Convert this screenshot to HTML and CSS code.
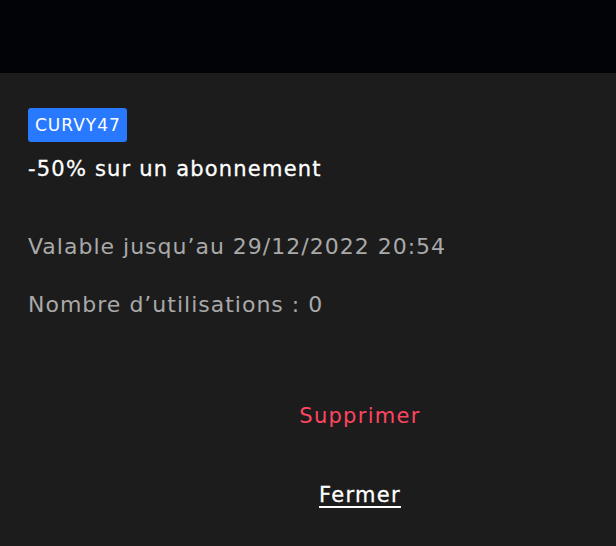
FILE: index.html
```html
<!DOCTYPE html>
<html lang="fr">
  <head>
    <meta charset="UTF-8" />
    <meta name="viewport" content="width=device-width, initial-scale=1" />
    <title>Code promo</title>
    <link rel="stylesheet" href="styles.css">
  </head>
  <body>
    <div class="backdrop"></div>

    <section class="modal">
      <div class="modal-body">
        <span class="code-badge">CURVY47</span>
        <h2 class="promo-title">-50% sur un abonnement</h2>
        <p class="promo-info">Valable jusqu’au 29/12/2022 20:54</p>
        <p class="promo-info">Nombre d’utilisations : 0</p>
      </div>

      <div class="modal-actions">
        <button class="btn-delete">Supprimer</button>
        <button class="btn-close">Fermer</button>
      </div>
    </section>
  </body>
</html>
```

FILE: styles.css
```css
/* Reset */
* {
  margin: 0;
  padding: 0;
  box-sizing: border-box;
}
body,
html {
  height: 100%;
  font-family: "DejaVu Sans", "Noto Sans", sans-serif;
  background-color: #1c1c1c;
  overflow: hidden;
}

/* Top strip */
.backdrop {
  height: 73px;
  background-color: #020307;
}

/* Modal */
.modal {
  background-color: #1c1c1c;
  padding: 35px 28px 0;
}

.code-badge {
  display: inline-block;
  background-color: #2979ff;
  color: #ffffff;
  font-size: 17px;
  line-height: 34px;
  letter-spacing: 1px;
  padding: 0 6px 0 7px;
  border-radius: 3px;
}

.promo-title {
  margin-top: 12px;
  font-size: 21px;
  line-height: 30px;
  font-weight: 500;
  letter-spacing: 1.2px;
  -webkit-text-stroke: 0.3px currentColor;
  color: #ffffff;
}

.promo-info {
  font-size: 22px;
  line-height: 33px;
  letter-spacing: 1px;
  color: #a9a9a9;
  margin-top: 46px;
}
.promo-info + .promo-info {
  margin-top: 25px;
}

/* Actions */
.modal-actions {
  display: flex;
  flex-direction: column;
  align-items: center;
  gap: 49px;
  padding-left: 104px;
  margin-top: 80px;
}

.modal-actions button {
  background: none;
  border: none;
  font-family: inherit;
  font-size: 21px;
  line-height: 30px;
  letter-spacing: 1.3px;
  cursor: pointer;
}

.btn-delete {
  color: #ff4560;
}

.btn-close {
  color: #ffffff;
  font-weight: 500;
  letter-spacing: 1.6px;
  -webkit-text-stroke: 0.3px currentColor;
  text-decoration: underline;
  text-underline-offset: 4px;
}
```
